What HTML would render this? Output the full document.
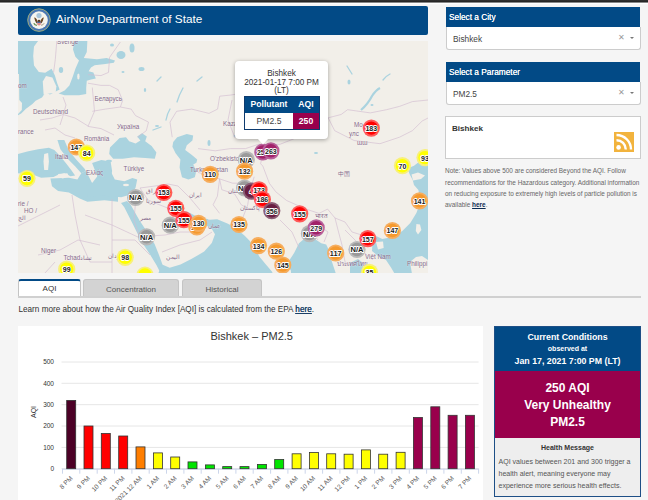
<!DOCTYPE html>
<html><head><meta charset="utf-8">
<style>
*{box-sizing:border-box;margin:0;padding:0}
html,body{width:648px;height:500px;overflow:hidden;background:#f5f5f5;font-family:"Liberation Sans",sans-serif;color:#333}
.abs{position:absolute}
#topbar{left:0;top:0;width:648px;height:5px;background:linear-gradient(#333 0,#222 2px,#888 2px,#888 2.6px,#fff 2.6px,#fff 4px,#f7f7f7 4px)}
#hdr{left:18px;top:6px;width:410px;height:29px;background:#024a86;border-radius:2px}
#hdr .t{position:absolute;left:38px;top:6.3px;color:#fff;font-size:11.75px;white-space:nowrap}
#map{left:18px;top:41px;width:410px;height:232px;background:#f2efe9;overflow:hidden}
.sh{left:446px;width:194px;height:20px;background:#024a86;color:#fff;font-size:8.3px;padding:4.8px 0 0 3px;white-space:nowrap;text-shadow:0 0 0.4px #fff}
.sel{left:446px;width:195px;height:22.5px;background:#fff;border:1px solid #ccc;border-top:none;border-radius:0 0 3px 3px;font-size:8.3px;color:#444;padding:6.5px 0 0 6px}
.sel .x{position:absolute;left:171px;top:5.5px;font-size:8px;color:#999}
.sel .c{position:absolute;left:183px;top:9.5px;width:0;height:0;border-left:2.3px solid transparent;border-right:2.3px solid transparent;border-top:2.6px solid #777}
#bbox{left:445px;top:116px;width:196px;height:43px;background:#fff;border:1px solid #ccc}
#bbox .t{position:absolute;left:6px;top:6.5px;font-weight:bold;font-size:8.1px;color:#333}
#rss{left:614px;top:132px;width:20px;height:20px;background:#f2b33d}
#note{left:445px;top:165.3px;width:200px;font-size:6.42px;line-height:11.3px;color:#666}
#note b{color:#0b2b52;text-decoration:underline}
.tab{top:279px;height:18px;border:1px solid #c4c4c4;border-bottom:none;border-radius:3px 3px 0 0;font-size:8px;color:#555;text-align:center;padding-top:5px;background:#d3d3d3}
#tabline{left:18px;top:296px;width:623px;height:2px;background:#d0d0d0}
#learn{left:18.5px;top:305px;font-size:8.16px;color:#333;white-space:nowrap}
#learn u{color:#1b3f66;text-shadow:0 0 0.3px #1b3f66}
#chart{left:18px;top:326px;width:465px;height:180px;background:#fff}
#cc{left:494px;top:326px;width:147px;height:171px;border:1px solid #1d4f86;background:#eee}
#cc .b{position:absolute;left:0;top:0;width:145px;height:44px;background:#024a86;color:#fff;font-weight:bold;text-align:center}
#cc .m{position:absolute;left:0;top:44px;width:145px;height:67px;background:#99004c;color:#fff;font-weight:bold;text-align:center;font-size:12px;line-height:17px;padding-top:9px}
#cc .h{position:absolute;left:0;top:111px;width:145px;color:#333}
</style></head><body>
<div id="topbar" class="abs"></div>
<div id="hdr" class="abs">
 <svg class="abs" style="left:9px;top:2px" width="24" height="24" viewBox="0 0 24 24">
  <circle cx="12" cy="12.1" r="11.3" fill="#4a78b4" stroke="#a9b27a" stroke-width="0.9"/>
  <circle cx="12" cy="12.1" r="8.8" fill="#f6f4ee"/>
  <circle cx="12" cy="7.6" r="2.6" fill="#a9c6dc"/>
  <path d="M7.2 9.5 Q9 9.2 10.6 13.2 L10.4 15.5 Q8.8 15 8 12.5Z" fill="#6e4b2a"/>
  <path d="M16.8 9.5 Q15 9.2 13.4 13.2 L13.6 15.5 Q15.2 15 16 12.5Z" fill="#6e4b2a"/>
  <circle cx="12" cy="13" r="1.3" fill="#5a3d22"/>
  <path d="M10.2 14.2 H13.8 V16.6 Q12 18.4 10.2 16.6Z" fill="#e08a8a"/>
  <rect x="10.2" y="13.8" width="3.6" height="1.2" fill="#4b6aa5"/>
  <path d="M6.8 15.2 Q8 17.5 10 17.2" fill="none" stroke="#5f8a4a" stroke-width="1.2"/>
  <path d="M17.2 15.2 Q16 17.5 14 17.2" fill="none" stroke="#9a8a6a" stroke-width="0.8"/>
 </svg>
 <div class="t">AirNow Department of State</div>
</div>
<div id="map" class="abs"><svg class="abs" style="left:0;top:0" width="410" height="232" viewBox="18 41 410 232">
<rect x="18" y="41" width="410" height="232" fill="#f2efe9"/>
<polygon points="18.0,40.0 38.8,40.0 34.0,46.4 33.2,56.0 34.0,65.6 38.8,72.0 45.2,72.8 51.6,68.8 54.8,75.2 57.2,83.2 59.6,89.6 50.0,94.4 45.2,92.8 42.0,97.6 35.6,100.8 32.4,104.0 26.0,108.8 21.2,113.6 18.0,115.2" fill="#aad3df"/>
<polygon points="18.0,74.0 19.0,74.0 19.3,100.0 22.0,103.0 21.8,110.0 19.0,113.0 18.0,114.0" fill="#f2efe9"/>
<polygon points="43.6,94.4 42.8,81.6 46.0,76.0 52.4,77.6 56.4,86.4 55.6,92.8 50.0,93.6" fill="#f2efe9"/>
<polygon points="74.2,40.0 87.4,40.0 86.8,52.0 83.8,58.0 97.0,59.2 106.6,58.0 115.0,60.4 113.8,62.8 105.4,64.0 94.6,65.2 91.0,67.6 88.6,71.2 93.4,72.4 95.8,78.4 91.0,79.6 86.8,80.8 86.2,88.0 86.2,94.0 79.0,95.2 64.6,95.2 58.6,93.4 64.6,90.4 69.4,85.6 73.0,76.0 75.4,68.8 79.0,60.4 75.4,56.8 73.0,49.6" fill="#aad3df"/>
<ellipse cx="78.4" cy="76.5" rx="1.2" ry="3" fill="#f2efe9"/>
<ellipse cx="121" cy="55" rx="4.5" ry="4" fill="#aad3df"/>
<ellipse cx="132" cy="48" rx="2.5" ry="4.5" fill="#aad3df"/>
<ellipse cx="61" cy="70" rx="2.2" ry="3" fill="#aad3df"/>
<ellipse cx="112" cy="45" rx="2" ry="1.5" fill="#aad3df"/>
<ellipse cx="145" cy="90" rx="1.2" ry="2" fill="#aad3df"/>
<g fill="none" stroke="#aad3df" stroke-width="1.3" stroke-linecap="round">
<path d="M177 102 Q179 95 183 88"/>
<path d="M197 81 L202 77"/>
<path d="M157 81 L161 77"/>
<path d="M166 120 Q167 114 170 109"/>
<path d="M153 130 L161 127"/>
<path d="M383 80 Q386 76 390 74"/>
<path d="M347 66 L352 74"/>
</g>
<ellipse cx="141.5" cy="69" rx="3" ry="2" fill="#aad3df"/>
<ellipse cx="123" cy="72" rx="1.5" ry="1" fill="#aad3df"/>
<polygon points="18.0,153.9 27.3,151.6 38.1,149.3 48.9,147.7 54.3,150.0 59.7,155.4 65.8,163.1 71.2,170.1 75.1,175.5 70.5,176.3 64.3,173.2 58.1,174.7 53.5,177.0 41.1,177.8 33.4,174.7 18.0,173.2" fill="#aad3df"/>
<polygon points="50.4,178.6 68.9,177.8 77.4,179.4 81.3,173.2 85.9,170.9 89.8,178.6 93.6,186.3 118.0,186.3 118.0,201.7 104.4,200.2 87.4,201.7 79.7,198.6 68.9,192.5 58.1,190.9 52.0,186.3" fill="#aad3df"/>
<polygon points="57.4,140.0 64.3,140.0 68.9,150.8 76.6,160.1 84.4,168.5 85.9,170.9 81.3,173.2 75.1,166.2 67.4,158.5 60.4,149.3" fill="#aad3df"/>
<polygon points="92.1,163.1 101.3,160.1 110.6,161.6 112.1,170.9 110.6,180.1 104.4,184.8 95.2,186.3 98.2,178.6 95.2,170.9" fill="#aad3df"/>
<polygon points="44.2,153.9 48.1,153.1 48.9,161.6 48.1,170.1 44.2,170.1 43.5,161.6" fill="#f2efe9"/>
<polygon points="58.1,174.0 67.4,173.2 68.9,176.3 62.8,178.6 58.1,177.0" fill="#f2efe9"/>
<ellipse cx="96" cy="185.5" rx="4.5" ry="1" fill="#f2efe9"/>
<polygon points="86.0,182.8 92.4,182.8 97.2,176.4 95.6,166.8 100.4,162.0 108.4,160.4 110.0,170.0 114.8,179.6 124.4,181.2 132.4,178.0 137.2,179.6 135.6,187.6 132.4,194.0 121.2,197.2 102.0,195.6 87.6,197.2" fill="#aad3df"/>
<ellipse cx="126" cy="185" rx="3" ry="1.2" fill="#f2efe9"/>
<polygon points="109.2,154.0 110.0,147.6 114.8,142.8 119.6,138.0 126.0,137.2 129.2,141.2 135.6,143.6 140.4,140.4 137.2,136.4 142.0,133.2 146.8,136.4 145.2,141.2 151.6,146.0 156.4,152.4 154.8,158.8 145.2,158.0 134.0,157.2 122.8,158.8 113.2,158.8" fill="#aad3df"/>
<ellipse cx="109" cy="161" rx="3" ry="1.2" fill="#aad3df"/>
<polygon points="177.2,137.2 186.8,134.0 193.2,135.6 192.4,140.4 186.8,145.2 185.2,150.0 191.6,154.8 197.2,159.6 196.4,162.8 193.2,164.4 196.4,170.8 194.8,177.2 188.4,179.6 182.0,177.2 179.6,167.6 180.4,159.6 175.6,153.2 172.4,146.8 173.2,142.0" fill="#aad3df"/>
<ellipse cx="209" cy="143" rx="1.5" ry="3" fill="#aad3df"/>
<ellipse cx="157" cy="126" rx="2" ry="1" fill="#aad3df"/>
<polygon points="121.0,203.0 124.3,207.3 133.0,224.6 141.6,241.8 150.2,254.8 156.7,265.6 160.0,272.0 163.0,268.0 162.1,263.4 158.9,254.8 154.6,244.0 148.0,233.2 139.4,220.2 130.8,205.1 127.0,201.0" fill="#aad3df"/>
<polygon points="179.4,210.5 187.0,211.6 197.8,217.0 208.6,219.2 205.3,225.6 197.8,226.7 191.3,224.6 184.8,219.2" fill="#aad3df"/>
<polygon points="158.0,274.0 162.1,264.5 169.7,267.8 180.5,264.5 191.3,259.1 204.2,251.6 211.8,242.9 215.0,234.3 211.8,228.9 206.4,225.6 202.1,220.2 217.2,219.2 227.4,223.5 234.8,227.2 244.7,235.8 249.6,240.7 254.6,248.1 259.5,256.8 265.7,264.2 271.9,271.6 273.1,274.0" fill="#aad3df"/>
<polygon points="282.0,274.0 286.7,264.2 294.1,253.1 299.0,243.2 306.4,237.0 313.8,238.3 321.2,243.2 326.2,244.4 328.6,249.4 331.1,259.3 333.6,266.7 336.0,274.0" fill="#aad3df"/>
<ellipse cx="289" cy="272" rx="2" ry="3" fill="#f2efe9"/>
<polygon points="350.0,263.0 358.0,259.0 363.0,263.0 363.0,274.0 350.0,274.0" fill="#aad3df"/>
<polygon points="407.3,168.4 414.0,165.7 419.5,161.6 430.0,163.0 430.0,274.0 394.8,274.0 391.0,267.6 386.0,260.0 378.0,256.0 372.0,251.0 372.6,240.0 376.0,236.0 382.3,239.0 392.3,237.1 402.3,231.0 410.3,223.1 416.4,213.1 420.4,202.0 418.4,190.0 414.0,185.0 412.7,180.0 410.0,175.0" fill="#aad3df"/>
<polygon points="416.4,224.0 420.0,224.5 421.4,230.0 418.0,234.6 415.8,231.0" fill="#f2efe9"/>
<polygon points="410.0,262.0 416.0,257.0 422.0,256.0 428.0,260.0 428.0,274.0 412.0,274.0" fill="#f2efe9"/>
<polygon points="376.0,242.0 383.0,241.5 383.7,248.0 378.0,249.5" fill="#f2efe9"/>
<polygon points="411.5,174.5 418.0,172.5 425.0,175.5 421.0,179.0 413.0,180.5" fill="#f2efe9"/>
<polygon points="419.0,150.0 428.0,148.0 428.0,163.0 423.0,166.0 420.0,160.0" fill="#f2efe9"/>
<path d="M361 110 Q368 104 372 96 Q376 90 380 88" fill="none" stroke="#aad3df" stroke-width="2.2"/>
<ellipse cx="349" cy="82" rx="1.5" ry="2.5" fill="#aad3df"/>
<ellipse cx="372" cy="105" rx="1.5" ry="1" fill="#aad3df"/>
<ellipse cx="316" cy="153" rx="2" ry="1" fill="#aad3df"/>
<ellipse cx="236" cy="136" rx="2.5" ry="1.2" fill="#aad3df"/>
<g fill="none" stroke="#d2bdd0" stroke-width="0.65" stroke-linejoin="round">
<polyline points="56.9,40 55.3,59.4 53.6,72.4"/>
<polyline points="120.4,42 109.6,57.3 108.5,72.4 101,75.6 88,74.6"/>
<polyline points="88,83.2 101,85.4 109.6,85.4 118.2,89.7 122.6,100.5 120.4,107 131.2,109.1 135.5,115.6 148.5,122.1 146.3,130.7 137.7,137.2"/>
<polyline points="92.3,111.3 105.3,109.1 120.4,107"/>
<polyline points="92.3,87.5 94.5,111.3 88,126.4"/>
<polyline points="63,97 66,105 63.4,114.5 60,125"/>
<polyline points="88,126.4 101,128.6 114,135"/>
<polyline points="40,120 52,118 63,114.5 75,118 88,126"/>
<polyline points="45,130 55,128 65,135 75,138"/>
<polyline points="172.2,137.2 170,122.1 176.6,111.3 191.7,109.1 209,113.4 217.6,109.1 219.7,96.2 231,95 250.4,91.8 282.8,101.6 328.2,117.8 341.1,114.5 347.6,109.7 370.3,112.9 386.5,109.7 399.5,106.4 412.4,101.6 428,100"/>
<polyline points="328.2,117.8 334.7,130.7 354.1,140.5 380,143.7 399.5,137.2 412.4,130.7 422.2,121 428,118"/>
<polyline points="198,148.6 215.3,150.8 230.4,148.6 245.5,148.6 258.5,144.3 280,144.3 290.9,140 310,132 328.2,117.8"/>
<polyline points="198,172.4 219.6,178.9 232.6,183.2 241.2,183.2"/>
<polyline points="219.6,178.9 221.8,189.7 234.7,194 241.2,204.8 249.8,209.1"/>
<polyline points="219.6,178.9 217.4,196.2 213.1,204.8 219.6,213.4"/>
<polyline points="254.2,176.7 249.8,191.8 247.7,204.8 241.2,222.1"/>
<polyline points="258.5,144.3 262.8,153 260.6,163.8 262.8,166 269.3,183.2 275.8,191.8 286.6,200.5 306,209.1 319,213.4 327.6,209.1 335,218 345,222 352,232 365,236 372,240"/>
<polyline points="324,242 328,232 318,225 312,232 318,240"/>
<polyline points="335,218 338,230 342,245 345,262 352,266"/>
<polyline points="345,230 355,240 362,250 368,256"/>
<polyline points="140,188 155,186 168,184 178,186 190,198 200,210"/>
<polyline points="140,188 148,200 160,205 178,212"/>
<polyline points="136,197 134,220 140,238"/>
<polyline points="112,199 112,240 112,273"/>
<polyline points="72,195 75,215 80,240 90,262 112,262"/>
<polyline points="85,215 112,225 140,238"/>
<polyline points="112,240 135,240 150,255"/>
<polyline points="18,226 40,215 60,205"/>
<polyline points="150,236 165,235 180,232 195,232 210,220"/>
<polyline points="162,252 180,245 200,240 212,232"/>
<polyline points="38,255 60,250 78,240 100,245"/>
<polyline points="45,273 55,262"/>
<polyline points="232,100 228,120 235,138"/>
<polyline points="280,220 292,232 300,250"/>
</g>
<g font-family="Liberation Sans" font-size="6.3" fill="#846888" stroke="#fff" stroke-width="0.6" stroke-opacity="0.5" paint-order="stroke">
<text x="33" y="113.5">Deutschland</text>
<text x="94.5" y="100.5">Беларусь</text>
<text x="117" y="128.5">Україна</text>
<text x="84" y="140.5">România</text>
<text x="55" y="158.5">Italia</text>
<text x="86" y="175">Ελλάς</text>
<text x="123.6" y="171">Türkiye</text>
<text x="18" y="134">rance</text>
<text x="18" y="88">om</text>
<text x="57" y="44">Sverige</text>
<text x="223" y="126">Kaza</text>
<text x="210" y="161">O'zbekiston</text>
<text x="190" y="172">Turkmenistan</text>
<text x="41" y="252.5">Niger</text>
<text x="63.5" y="259.5">Tchad</text>
<text x="140" y="220">مصر</text>
<text x="189" y="197">ايران</text><text x="146" y="193">العراق</text><text x="146" y="203">سوريا</text>
<text x="166" y="259">اليمن</text><text x="108" y="258">السودان</text><text x="80" y="259.5">تشاد</text>
<text x="208" y="228">عمان</text>
<text x="338" y="175.5">中国</text>
<text x="365" y="259">Việt Nam</text>
<text x="337" y="266">ประเทศไทย</text>
<text x="407" y="266">Philippi</text>
<text x="354" y="127">Mo</text>
<text x="349" y="136">улс</text>
<text x="357" y="145">ɯɯ</text>
<text x="18" y="206">rie /</text><text x="24" y="213">НО /</text><text x="18" y="220">الج</text>
<text x="315" y="218">भारत</text>
<text x="240" y="210">پاکستان</text>
<text x="228" y="193">افغانستان</text>
</g>

<circle cx="76.3" cy="147" r="8.6" fill="#f6ad5e"/><circle cx="76.3" cy="147" r="6.7" fill="#f59a2e"/>
<text x="76.3" y="149.9" font-size="8" font-weight="bold" text-anchor="middle" fill="#1a1a1a" stroke="#fff" stroke-width="2" textLength="11.7" lengthAdjust="spacingAndGlyphs" paint-order="stroke" stroke-linejoin="round">147</text>
<circle cx="86.7" cy="153" r="8.6" fill="#f8f07a"/><circle cx="86.7" cy="153" r="6.7" fill="#ffff00"/>
<text x="86.7" y="155.9" font-size="8" font-weight="bold" text-anchor="middle" fill="#1a1a1a" stroke="#fff" stroke-width="2" textLength="7.8" lengthAdjust="spacingAndGlyphs" paint-order="stroke" stroke-linejoin="round">84</text>
<circle cx="27" cy="178.5" r="8.6" fill="#f8f07a"/><circle cx="27" cy="178.5" r="6.7" fill="#ffff00"/>
<text x="27" y="181.4" font-size="8" font-weight="bold" text-anchor="middle" fill="#1a1a1a" stroke="#fff" stroke-width="2" textLength="7.8" lengthAdjust="spacingAndGlyphs" paint-order="stroke" stroke-linejoin="round">59</text>
<circle cx="210.2" cy="174.3" r="8.6" fill="#f6ad5e"/><circle cx="210.2" cy="174.3" r="6.7" fill="#f59a2e"/>
<text x="210.2" y="177.20000000000002" font-size="8" font-weight="bold" text-anchor="middle" fill="#1a1a1a" stroke="#fff" stroke-width="2" textLength="11.7" lengthAdjust="spacingAndGlyphs" paint-order="stroke" stroke-linejoin="round">110</text>
<circle cx="135.6" cy="197.5" r="8.6" fill="#b8b8b8"/><circle cx="135.6" cy="197.5" r="6.7" fill="#9a9a9a"/>
<text x="135.6" y="200.4" font-size="8" font-weight="bold" text-anchor="middle" fill="#1a1a1a" stroke="#fff" stroke-width="2" textLength="13" lengthAdjust="spacingAndGlyphs" paint-order="stroke" stroke-linejoin="round">N/A</text>
<circle cx="163.8" cy="192.5" r="8.6" fill="#ff5a5a"/><circle cx="163.8" cy="192.5" r="6.7" fill="#ff0000"/>
<text x="163.8" y="195.4" font-size="8" font-weight="bold" text-anchor="middle" fill="#1a1a1a" stroke="#fff" stroke-width="2" textLength="11.7" lengthAdjust="spacingAndGlyphs" paint-order="stroke" stroke-linejoin="round">153</text>
<circle cx="175.8" cy="208.3" r="8.6" fill="#ff5a5a"/><circle cx="175.8" cy="208.3" r="6.7" fill="#ff0000"/>
<text x="175.8" y="211.20000000000002" font-size="8" font-weight="bold" text-anchor="middle" fill="#1a1a1a" stroke="#fff" stroke-width="2" textLength="11.7" lengthAdjust="spacingAndGlyphs" paint-order="stroke" stroke-linejoin="round">155</text>
<circle cx="170.3" cy="225.2" r="8.6" fill="#b8b8b8"/><circle cx="170.3" cy="225.2" r="6.7" fill="#9a9a9a"/>
<text x="170.3" y="228.1" font-size="8" font-weight="bold" text-anchor="middle" fill="#1a1a1a" stroke="#fff" stroke-width="2" textLength="13" lengthAdjust="spacingAndGlyphs" paint-order="stroke" stroke-linejoin="round">N/A</text>
<circle cx="183.9" cy="219.7" r="8.6" fill="#ff5a5a"/><circle cx="183.9" cy="219.7" r="6.7" fill="#ff0000"/>
<text x="183.9" y="222.6" font-size="8" font-weight="bold" text-anchor="middle" fill="#1a1a1a" stroke="#fff" stroke-width="2" textLength="11.7" lengthAdjust="spacingAndGlyphs" paint-order="stroke" stroke-linejoin="round">155</text>
<circle cx="196.8" cy="227" r="8.6" fill="#f6ad5e"/><circle cx="196.8" cy="227" r="6.7" fill="#f59a2e"/>
<text x="196.8" y="229.9" font-size="8" font-weight="bold" text-anchor="middle" fill="#1a1a1a" stroke="#fff" stroke-width="2" textLength="11.7" lengthAdjust="spacingAndGlyphs" paint-order="stroke" stroke-linejoin="round">164</text>
<circle cx="198.6" cy="223.4" r="8.6" fill="#f6ad5e"/><circle cx="198.6" cy="223.4" r="6.7" fill="#f59a2e"/>
<text x="198.6" y="226.3" font-size="8" font-weight="bold" text-anchor="middle" fill="#1a1a1a" stroke="#fff" stroke-width="2" textLength="11.7" lengthAdjust="spacingAndGlyphs" paint-order="stroke" stroke-linejoin="round">130</text>
<circle cx="146.6" cy="236.8" r="8.6" fill="#b8b8b8"/><circle cx="146.6" cy="236.8" r="6.7" fill="#9a9a9a"/>
<text x="146.6" y="239.70000000000002" font-size="8" font-weight="bold" text-anchor="middle" fill="#1a1a1a" stroke="#fff" stroke-width="2" textLength="13" lengthAdjust="spacingAndGlyphs" paint-order="stroke" stroke-linejoin="round">N/A</text>
<circle cx="125.2" cy="257.3" r="8.6" fill="#f8f07a"/><circle cx="125.2" cy="257.3" r="6.7" fill="#ffff00"/>
<text x="125.2" y="260.2" font-size="8" font-weight="bold" text-anchor="middle" fill="#1a1a1a" stroke="#fff" stroke-width="2" textLength="7.8" lengthAdjust="spacingAndGlyphs" paint-order="stroke" stroke-linejoin="round">98</text>
<circle cx="66.7" cy="269.1" r="8.6" fill="#f8f07a"/><circle cx="66.7" cy="269.1" r="6.7" fill="#ffff00"/>
<text x="66.7" y="272.0" font-size="8" font-weight="bold" text-anchor="middle" fill="#1a1a1a" stroke="#fff" stroke-width="2" textLength="7.8" lengthAdjust="spacingAndGlyphs" paint-order="stroke" stroke-linejoin="round">99</text>
<circle cx="145" cy="275" r="8.6" fill="#f8f07a"/><circle cx="145" cy="275" r="6.7" fill="#ffff00"/>
<circle cx="262.8" cy="152" r="8.6" fill="#b8609a"/><circle cx="262.8" cy="152" r="6.7" fill="#a2226a"/>
<text x="262.8" y="154.9" font-size="8" font-weight="bold" text-anchor="middle" fill="#1a1a1a" stroke="#fff" stroke-width="2" textLength="11.7" lengthAdjust="spacingAndGlyphs" paint-order="stroke" stroke-linejoin="round">250</text>
<circle cx="270.9" cy="150.8" r="8.6" fill="#b8609a"/><circle cx="270.9" cy="150.8" r="6.7" fill="#a2226a"/>
<text x="270.9" y="153.70000000000002" font-size="8" font-weight="bold" text-anchor="middle" fill="#1a1a1a" stroke="#fff" stroke-width="2" textLength="11.7" lengthAdjust="spacingAndGlyphs" paint-order="stroke" stroke-linejoin="round">263</text>
<circle cx="246.3" cy="159.7" r="8.6" fill="#b8b8b8"/><circle cx="246.3" cy="159.7" r="6.7" fill="#9a9a9a"/>
<text x="246.3" y="162.6" font-size="8" font-weight="bold" text-anchor="middle" fill="#1a1a1a" stroke="#fff" stroke-width="2" textLength="13" lengthAdjust="spacingAndGlyphs" paint-order="stroke" stroke-linejoin="round">N/A</text>
<circle cx="244.6" cy="171.2" r="8.6" fill="#f6ad5e"/><circle cx="244.6" cy="171.2" r="6.7" fill="#f59a2e"/>
<text x="244.6" y="174.1" font-size="8" font-weight="bold" text-anchor="middle" fill="#1a1a1a" stroke="#fff" stroke-width="2" textLength="11.7" lengthAdjust="spacingAndGlyphs" paint-order="stroke" stroke-linejoin="round">132</text>
<circle cx="244.6" cy="188" r="8.6" fill="#b8b8b8"/><circle cx="244.6" cy="188" r="6.7" fill="#9a9a9a"/>
<text x="244.6" y="190.9" font-size="8" font-weight="bold" text-anchor="middle" fill="#1a1a1a" stroke="#fff" stroke-width="2" textLength="13" lengthAdjust="spacingAndGlyphs" paint-order="stroke" stroke-linejoin="round">N/A</text>
<circle cx="251.4" cy="191.1" r="8.6" fill="#8b5c74"/><circle cx="251.4" cy="191.1" r="6.7" fill="#6a1e42"/>
<text x="251.4" y="194.0" font-size="8" font-weight="bold" text-anchor="middle" fill="#1a1a1a" stroke="#fff" stroke-width="2" textLength="3.9" lengthAdjust="spacingAndGlyphs" paint-order="stroke" stroke-linejoin="round">4</text>
<circle cx="259" cy="189.8" r="8.6" fill="#ff5a5a"/><circle cx="259" cy="189.8" r="6.7" fill="#ff0000"/>
<text x="259" y="192.70000000000002" font-size="8" font-weight="bold" text-anchor="middle" fill="#1a1a1a" stroke="#fff" stroke-width="2" textLength="11.7" lengthAdjust="spacingAndGlyphs" paint-order="stroke" stroke-linejoin="round">173</text>
<circle cx="262.4" cy="199.3" r="8.6" fill="#ff5a5a"/><circle cx="262.4" cy="199.3" r="6.7" fill="#ff0000"/>
<text x="262.4" y="202.20000000000002" font-size="8" font-weight="bold" text-anchor="middle" fill="#1a1a1a" stroke="#fff" stroke-width="2" textLength="11.7" lengthAdjust="spacingAndGlyphs" paint-order="stroke" stroke-linejoin="round">186</text>
<circle cx="271.8" cy="210.7" r="8.6" fill="#8b5c74"/><circle cx="271.8" cy="210.7" r="6.7" fill="#6a1e42"/>
<text x="271.8" y="213.6" font-size="8" font-weight="bold" text-anchor="middle" fill="#1a1a1a" stroke="#fff" stroke-width="2" textLength="11.7" lengthAdjust="spacingAndGlyphs" paint-order="stroke" stroke-linejoin="round">356</text>
<circle cx="299.7" cy="213.8" r="8.6" fill="#ff5a5a"/><circle cx="299.7" cy="213.8" r="6.7" fill="#ff0000"/>
<text x="299.7" y="216.70000000000002" font-size="8" font-weight="bold" text-anchor="middle" fill="#1a1a1a" stroke="#fff" stroke-width="2" textLength="11.7" lengthAdjust="spacingAndGlyphs" paint-order="stroke" stroke-linejoin="round">155</text>
<circle cx="239" cy="224.5" r="8.6" fill="#f6ad5e"/><circle cx="239" cy="224.5" r="6.7" fill="#f59a2e"/>
<text x="239" y="227.4" font-size="8" font-weight="bold" text-anchor="middle" fill="#1a1a1a" stroke="#fff" stroke-width="2" textLength="11.7" lengthAdjust="spacingAndGlyphs" paint-order="stroke" stroke-linejoin="round">135</text>
<circle cx="309.4" cy="233.6" r="8.6" fill="#b8b8b8"/><circle cx="309.4" cy="233.6" r="6.7" fill="#9a9a9a"/>
<text x="309.4" y="236.5" font-size="8" font-weight="bold" text-anchor="middle" fill="#1a1a1a" stroke="#fff" stroke-width="2" textLength="13" lengthAdjust="spacingAndGlyphs" paint-order="stroke" stroke-linejoin="round">N/A</text>
<circle cx="316.2" cy="227.8" r="8.6" fill="#b8609a"/><circle cx="316.2" cy="227.8" r="6.7" fill="#a2226a"/>
<text x="316.2" y="230.70000000000002" font-size="8" font-weight="bold" text-anchor="middle" fill="#1a1a1a" stroke="#fff" stroke-width="2" textLength="11.7" lengthAdjust="spacingAndGlyphs" paint-order="stroke" stroke-linejoin="round">279</text>
<circle cx="258.5" cy="245.6" r="8.6" fill="#f6ad5e"/><circle cx="258.5" cy="245.6" r="6.7" fill="#f59a2e"/>
<text x="258.5" y="248.5" font-size="8" font-weight="bold" text-anchor="middle" fill="#1a1a1a" stroke="#fff" stroke-width="2" textLength="11.7" lengthAdjust="spacingAndGlyphs" paint-order="stroke" stroke-linejoin="round">134</text>
<circle cx="276.3" cy="251.1" r="8.6" fill="#f6ad5e"/><circle cx="276.3" cy="251.1" r="6.7" fill="#f59a2e"/>
<text x="276.3" y="254.0" font-size="8" font-weight="bold" text-anchor="middle" fill="#1a1a1a" stroke="#fff" stroke-width="2" textLength="11.7" lengthAdjust="spacingAndGlyphs" paint-order="stroke" stroke-linejoin="round">126</text>
<circle cx="282.8" cy="265" r="8.6" fill="#f6ad5e"/><circle cx="282.8" cy="265" r="6.7" fill="#f59a2e"/>
<text x="282.8" y="267.9" font-size="8" font-weight="bold" text-anchor="middle" fill="#1a1a1a" stroke="#fff" stroke-width="2" textLength="11.7" lengthAdjust="spacingAndGlyphs" paint-order="stroke" stroke-linejoin="round">145</text>
<circle cx="335.7" cy="253" r="8.6" fill="#f6ad5e"/><circle cx="335.7" cy="253" r="6.7" fill="#f59a2e"/>
<text x="335.7" y="255.9" font-size="8" font-weight="bold" text-anchor="middle" fill="#1a1a1a" stroke="#fff" stroke-width="2" textLength="11.7" lengthAdjust="spacingAndGlyphs" paint-order="stroke" stroke-linejoin="round">117</text>
<circle cx="357" cy="249.5" r="8.6" fill="#b8b8b8"/><circle cx="357" cy="249.5" r="6.7" fill="#9a9a9a"/>
<text x="357" y="252.4" font-size="8" font-weight="bold" text-anchor="middle" fill="#1a1a1a" stroke="#fff" stroke-width="2" textLength="13" lengthAdjust="spacingAndGlyphs" paint-order="stroke" stroke-linejoin="round">N/A</text>
<circle cx="367.8" cy="238.6" r="8.6" fill="#ff5a5a"/><circle cx="367.8" cy="238.6" r="6.7" fill="#ff0000"/>
<text x="367.8" y="241.5" font-size="8" font-weight="bold" text-anchor="middle" fill="#1a1a1a" stroke="#fff" stroke-width="2" textLength="11.7" lengthAdjust="spacingAndGlyphs" paint-order="stroke" stroke-linejoin="round">157</text>
<circle cx="392.4" cy="230.5" r="8.6" fill="#f6ad5e"/><circle cx="392.4" cy="230.5" r="6.7" fill="#f59a2e"/>
<text x="392.4" y="233.4" font-size="8" font-weight="bold" text-anchor="middle" fill="#1a1a1a" stroke="#fff" stroke-width="2" textLength="11.7" lengthAdjust="spacingAndGlyphs" paint-order="stroke" stroke-linejoin="round">147</text>
<circle cx="419.5" cy="200.8" r="8.6" fill="#f6ad5e"/><circle cx="419.5" cy="200.8" r="6.7" fill="#f59a2e"/>
<text x="419.5" y="203.70000000000002" font-size="8" font-weight="bold" text-anchor="middle" fill="#1a1a1a" stroke="#fff" stroke-width="2" textLength="11.7" lengthAdjust="spacingAndGlyphs" paint-order="stroke" stroke-linejoin="round">141</text>
<circle cx="402.4" cy="165.7" r="8.6" fill="#f8f07a"/><circle cx="402.4" cy="165.7" r="6.7" fill="#ffff00"/>
<text x="402.4" y="168.6" font-size="8" font-weight="bold" text-anchor="middle" fill="#1a1a1a" stroke="#fff" stroke-width="2" textLength="7.8" lengthAdjust="spacingAndGlyphs" paint-order="stroke" stroke-linejoin="round">70</text>
<circle cx="425" cy="157.6" r="8.6" fill="#f8f07a"/><circle cx="425" cy="157.6" r="6.7" fill="#ffff00"/>
<text x="425" y="160.5" font-size="8" font-weight="bold" text-anchor="middle" fill="#1a1a1a" stroke="#fff" stroke-width="2" textLength="7.8" lengthAdjust="spacingAndGlyphs" paint-order="stroke" stroke-linejoin="round">93</text>
<circle cx="369.5" cy="272.4" r="8.6" fill="#f8f07a"/><circle cx="369.5" cy="272.4" r="6.7" fill="#ffff00"/>
<text x="369.5" y="275.29999999999995" font-size="8" font-weight="bold" text-anchor="middle" fill="#1a1a1a" stroke="#fff" stroke-width="2" textLength="7.8" lengthAdjust="spacingAndGlyphs" paint-order="stroke" stroke-linejoin="round">35</text>
<circle cx="371.3" cy="128.1" r="8.6" fill="#ff5a5a"/><circle cx="371.3" cy="128.1" r="6.7" fill="#ff0000"/>
<text x="371.3" y="131.0" font-size="8" font-weight="bold" text-anchor="middle" fill="#1a1a1a" stroke="#fff" stroke-width="2" textLength="11.7" lengthAdjust="spacingAndGlyphs" paint-order="stroke" stroke-linejoin="round">183</text>
</svg></div>

<div id="popup" class="abs" style="left:235px;top:61px;width:93px;height:78px;background:#fff;border-radius:4px;box-shadow:0 1px 4.5px rgba(0,0,0,0.33)">
 <div class="abs" style="left:0;top:9px;width:93px;text-align:center;font-size:8.2px;line-height:8.6px;color:#333">Bishkek<br>2021-01-17 7:00 PM<br>(LT)</div>
 <div class="abs" style="left:9px;top:35px;width:76px;height:34px;border:1px solid #0d3a6e;background:#024a86">
  <div class="abs" style="left:0;top:0;width:48px;height:16px;color:#fff;font-weight:bold;font-size:8.6px;text-align:center;padding-top:2.3px">Pollutant</div>
  <div class="abs" style="left:48px;top:0;width:26px;height:16px;color:#fff;font-weight:bold;font-size:8.6px;text-align:center;padding-top:2.3px">AQI</div>
  <div class="abs" style="left:0;top:16px;width:48px;height:16px;background:#fff;color:#444;font-size:8.6px;text-align:center;padding-top:2.8px">PM2.5</div>
  <div class="abs" style="left:48px;top:16px;width:26px;height:16px;background:#99004c;color:#fff;font-weight:bold;font-size:8.6px;text-align:center;padding-top:2.8px">250</div>
 </div>
</div>
<svg class="abs" style="left:254px;top:138px" width="18" height="8" viewBox="0 0 18 8"><path d="M3 0 L9 6.5 L15 0Z" fill="#fff"/></svg>
<div class="sh abs" style="top:7px">Select a City</div>
<div class="sel abs" style="top:27px">Bishkek<span class="x">✕</span><span class="c"></span></div>
<div class="sh abs" style="top:62px">Select a Parameter</div>
<div class="sel abs" style="top:82px">PM2.5<span class="x">✕</span><span class="c"></span></div>
<div id="bbox" class="abs"><div class="t">Bishkek</div></div>
<svg id="rss" class="abs" width="20" height="20" viewBox="0 0 20 20">
 <circle cx="4.6" cy="15.4" r="2.3" fill="#fff"/>
 <path d="M2.5 8.2 A9.3 9.3 0 0 1 11.8 17.5" fill="none" stroke="#fff" stroke-width="2.4"/>
 <path d="M2.5 3 A14.5 14.5 0 0 1 17 17.5" fill="none" stroke="#fff" stroke-width="2.4"/>
</svg>
<div id="note" class="abs">Note: Values above 500 are considered Beyond the AQI. Follow<br>recommendations for the Hazardous category. Additional information<br>on reducing exposure to extremely high levels of particle pollution is<br>available <b>here</b>.</div>

<div class="tab abs" style="left:18px;width:63px;background:#fff;border-top:2px solid #024a86;padding-top:3px;color:#333">AQI</div>
<div class="tab abs" style="left:83px;width:96px">Concentration</div>
<div class="tab abs" style="left:182px;width:80px">Historical</div>
<div id="tabline" class="abs"></div>
<div id="learn" class="abs">Learn more about how the Air Quality Index [AQI] is calculated from the EPA <u>here</u>.</div>

<div id="chart" class="abs"></div><svg class="abs" style="left:0;top:0" width="648" height="500" viewBox="0 0 648 500">
<line x1="61.5" y1="362.0" x2="478.6" y2="362.0" stroke="#e6e6e6" stroke-width="1"/>
<text x="54" y="364.3" font-size="6.5" text-anchor="end" fill="#333">500</text>
<line x1="61.5" y1="383.3" x2="478.6" y2="383.3" stroke="#e6e6e6" stroke-width="1"/>
<text x="54" y="385.6" font-size="6.5" text-anchor="end" fill="#333">400</text>
<line x1="61.5" y1="404.7" x2="478.6" y2="404.7" stroke="#e6e6e6" stroke-width="1"/>
<text x="54" y="407.0" font-size="6.5" text-anchor="end" fill="#333">300</text>
<line x1="61.5" y1="426.0" x2="478.6" y2="426.0" stroke="#e6e6e6" stroke-width="1"/>
<text x="54" y="428.3" font-size="6.5" text-anchor="end" fill="#333">200</text>
<line x1="61.5" y1="447.4" x2="478.6" y2="447.4" stroke="#e6e6e6" stroke-width="1"/>
<text x="54" y="449.7" font-size="6.5" text-anchor="end" fill="#333">100</text>
<line x1="61.5" y1="468.7" x2="478.6" y2="468.7" stroke="#e6e6e6" stroke-width="1"/>
<text x="54" y="471.0" font-size="6.5" text-anchor="end" fill="#333">0</text>
<line x1="62.5" y1="469.2" x2="478.6" y2="469.2" stroke="#ccd6eb" stroke-width="1"/>
<line x1="62.5" y1="468.7" x2="62.5" y2="473.7" stroke="#ccd6eb" stroke-width="1"/>
<line x1="79.8" y1="468.7" x2="79.8" y2="473.7" stroke="#ccd6eb" stroke-width="1"/>
<line x1="97.2" y1="468.7" x2="97.2" y2="473.7" stroke="#ccd6eb" stroke-width="1"/>
<line x1="114.5" y1="468.7" x2="114.5" y2="473.7" stroke="#ccd6eb" stroke-width="1"/>
<line x1="131.9" y1="468.7" x2="131.9" y2="473.7" stroke="#ccd6eb" stroke-width="1"/>
<line x1="149.2" y1="468.7" x2="149.2" y2="473.7" stroke="#ccd6eb" stroke-width="1"/>
<line x1="166.5" y1="468.7" x2="166.5" y2="473.7" stroke="#ccd6eb" stroke-width="1"/>
<line x1="183.9" y1="468.7" x2="183.9" y2="473.7" stroke="#ccd6eb" stroke-width="1"/>
<line x1="201.2" y1="468.7" x2="201.2" y2="473.7" stroke="#ccd6eb" stroke-width="1"/>
<line x1="218.5" y1="468.7" x2="218.5" y2="473.7" stroke="#ccd6eb" stroke-width="1"/>
<line x1="235.9" y1="468.7" x2="235.9" y2="473.7" stroke="#ccd6eb" stroke-width="1"/>
<line x1="253.2" y1="468.7" x2="253.2" y2="473.7" stroke="#ccd6eb" stroke-width="1"/>
<line x1="270.6" y1="468.7" x2="270.6" y2="473.7" stroke="#ccd6eb" stroke-width="1"/>
<line x1="287.9" y1="468.7" x2="287.9" y2="473.7" stroke="#ccd6eb" stroke-width="1"/>
<line x1="305.2" y1="468.7" x2="305.2" y2="473.7" stroke="#ccd6eb" stroke-width="1"/>
<line x1="322.6" y1="468.7" x2="322.6" y2="473.7" stroke="#ccd6eb" stroke-width="1"/>
<line x1="339.9" y1="468.7" x2="339.9" y2="473.7" stroke="#ccd6eb" stroke-width="1"/>
<line x1="357.2" y1="468.7" x2="357.2" y2="473.7" stroke="#ccd6eb" stroke-width="1"/>
<line x1="374.6" y1="468.7" x2="374.6" y2="473.7" stroke="#ccd6eb" stroke-width="1"/>
<line x1="391.9" y1="468.7" x2="391.9" y2="473.7" stroke="#ccd6eb" stroke-width="1"/>
<line x1="409.3" y1="468.7" x2="409.3" y2="473.7" stroke="#ccd6eb" stroke-width="1"/>
<line x1="426.6" y1="468.7" x2="426.6" y2="473.7" stroke="#ccd6eb" stroke-width="1"/>
<line x1="443.9" y1="468.7" x2="443.9" y2="473.7" stroke="#ccd6eb" stroke-width="1"/>
<line x1="461.3" y1="468.7" x2="461.3" y2="473.7" stroke="#ccd6eb" stroke-width="1"/>
<line x1="478.6" y1="468.7" x2="478.6" y2="473.7" stroke="#ccd6eb" stroke-width="1"/>
<rect x="66.7" y="400.4" width="9" height="68.3" fill="#4c0026" stroke="#333" stroke-width="0.8"/>
<text x="73.0" y="478.7" font-size="6.5" text-anchor="end" fill="#555" transform="rotate(-45 73.0 478.7)">8 PM</text>
<rect x="84.0" y="426.0" width="9" height="42.7" fill="#ff0000" stroke="#333" stroke-width="0.8"/>
<text x="90.3" y="478.7" font-size="6.5" text-anchor="end" fill="#555" transform="rotate(-45 90.3 478.7)">9 PM</text>
<rect x="101.3" y="433.5" width="9" height="35.2" fill="#ff0000" stroke="#333" stroke-width="0.8"/>
<text x="107.6" y="478.7" font-size="6.5" text-anchor="end" fill="#555" transform="rotate(-45 107.6 478.7)">10 PM</text>
<rect x="118.7" y="436.0" width="9" height="32.7" fill="#ff0000" stroke="#333" stroke-width="0.8"/>
<text x="125.0" y="478.7" font-size="6.5" text-anchor="end" fill="#555" transform="rotate(-45 125.0 478.7)">11 PM</text>
<rect x="136.0" y="446.9" width="9" height="21.8" fill="#ff7e00" stroke="#333" stroke-width="0.8"/>
<text x="142.3" y="478.7" font-size="6.5" text-anchor="end" fill="#555" transform="rotate(-45 142.3 478.7)">1/17/2021 12 AM</text>
<rect x="153.4" y="452.9" width="9" height="15.8" fill="#ffff00" stroke="#333" stroke-width="0.8"/>
<text x="159.7" y="478.7" font-size="6.5" text-anchor="end" fill="#555" transform="rotate(-45 159.7 478.7)">1 AM</text>
<rect x="170.7" y="457.0" width="9" height="11.7" fill="#ffff00" stroke="#333" stroke-width="0.8"/>
<text x="177.0" y="478.7" font-size="6.5" text-anchor="end" fill="#555" transform="rotate(-45 177.0 478.7)">2 AM</text>
<rect x="188.0" y="461.9" width="9" height="6.8" fill="#00e400" stroke="#333" stroke-width="0.8"/>
<text x="194.3" y="478.7" font-size="6.5" text-anchor="end" fill="#555" transform="rotate(-45 194.3 478.7)">3 AM</text>
<rect x="205.4" y="464.9" width="9" height="3.8" fill="#00e400" stroke="#333" stroke-width="0.8"/>
<text x="211.7" y="478.7" font-size="6.5" text-anchor="end" fill="#555" transform="rotate(-45 211.7 478.7)">4 AM</text>
<rect x="222.7" y="466.6" width="9" height="2.1" fill="#00e400" stroke="#333" stroke-width="0.8"/>
<text x="229.0" y="478.7" font-size="6.5" text-anchor="end" fill="#555" transform="rotate(-45 229.0 478.7)">5 AM</text>
<rect x="240.0" y="466.6" width="9" height="2.1" fill="#00e400" stroke="#333" stroke-width="0.8"/>
<text x="246.3" y="478.7" font-size="6.5" text-anchor="end" fill="#555" transform="rotate(-45 246.3 478.7)">6 AM</text>
<rect x="257.4" y="464.4" width="9" height="4.3" fill="#00e400" stroke="#333" stroke-width="0.8"/>
<text x="263.7" y="478.7" font-size="6.5" text-anchor="end" fill="#555" transform="rotate(-45 263.7 478.7)">7 AM</text>
<rect x="274.7" y="459.5" width="9" height="9.2" fill="#00e400" stroke="#333" stroke-width="0.8"/>
<text x="281.0" y="478.7" font-size="6.5" text-anchor="end" fill="#555" transform="rotate(-45 281.0 478.7)">8 AM</text>
<rect x="292.1" y="453.8" width="9" height="14.9" fill="#ffff00" stroke="#333" stroke-width="0.8"/>
<text x="298.4" y="478.7" font-size="6.5" text-anchor="end" fill="#555" transform="rotate(-45 298.4 478.7)">9 AM</text>
<rect x="309.4" y="452.5" width="9" height="16.2" fill="#ffff00" stroke="#333" stroke-width="0.8"/>
<text x="315.7" y="478.7" font-size="6.5" text-anchor="end" fill="#555" transform="rotate(-45 315.7 478.7)">10 AM</text>
<rect x="326.7" y="453.8" width="9" height="14.9" fill="#ffff00" stroke="#333" stroke-width="0.8"/>
<text x="333.0" y="478.7" font-size="6.5" text-anchor="end" fill="#555" transform="rotate(-45 333.0 478.7)">11 AM</text>
<rect x="344.1" y="454.2" width="9" height="14.5" fill="#ffff00" stroke="#333" stroke-width="0.8"/>
<text x="350.4" y="478.7" font-size="6.5" text-anchor="end" fill="#555" transform="rotate(-45 350.4 478.7)">12 PM</text>
<rect x="361.4" y="449.9" width="9" height="18.8" fill="#ffff00" stroke="#333" stroke-width="0.8"/>
<text x="367.7" y="478.7" font-size="6.5" text-anchor="end" fill="#555" transform="rotate(-45 367.7 478.7)">1 PM</text>
<rect x="378.7" y="454.2" width="9" height="14.5" fill="#ffff00" stroke="#333" stroke-width="0.8"/>
<text x="385.0" y="478.7" font-size="6.5" text-anchor="end" fill="#555" transform="rotate(-45 385.0 478.7)">2 PM</text>
<rect x="396.1" y="452.3" width="9" height="16.4" fill="#ffff00" stroke="#333" stroke-width="0.8"/>
<text x="402.4" y="478.7" font-size="6.5" text-anchor="end" fill="#555" transform="rotate(-45 402.4 478.7)">3 PM</text>
<rect x="413.4" y="417.5" width="9" height="51.2" fill="#99004c" stroke="#333" stroke-width="0.8"/>
<text x="419.7" y="478.7" font-size="6.5" text-anchor="end" fill="#555" transform="rotate(-45 419.7 478.7)">4 PM</text>
<rect x="430.8" y="406.8" width="9" height="61.9" fill="#99004c" stroke="#333" stroke-width="0.8"/>
<text x="437.1" y="478.7" font-size="6.5" text-anchor="end" fill="#555" transform="rotate(-45 437.1 478.7)">5 PM</text>
<rect x="448.1" y="415.3" width="9" height="53.4" fill="#99004c" stroke="#333" stroke-width="0.8"/>
<text x="454.4" y="478.7" font-size="6.5" text-anchor="end" fill="#555" transform="rotate(-45 454.4 478.7)">6 PM</text>
<rect x="465.4" y="415.3" width="9" height="53.4" fill="#99004c" stroke="#333" stroke-width="0.8"/>
<text x="471.7" y="478.7" font-size="6.5" text-anchor="end" fill="#555" transform="rotate(-45 471.7 478.7)">7 PM</text>
<text x="35.5" y="412" font-size="7" text-anchor="middle" fill="#333" transform="rotate(-90 35.5 412)">AQI</text>
<text x="251.7" y="340" font-size="11" text-anchor="middle" fill="#333">Bishkek – PM2.5</text>
</svg>

<div id="cc" class="abs">
 <div class="b"><div class="abs" style="left:0;top:5px;width:145px;font-size:8.8px">Current Conditions</div><div class="abs" style="left:0;top:17.5px;width:145px;font-size:7px">observed at</div><div class="abs" style="left:0;top:29px;width:145px;font-size:8.8px">Jan 17, 2021 7:00 PM (LT)</div></div>
 <div class="m">250 AQI<br>Very Unhealthy<br>PM2.5</div>
 <div class="h"><div style="font-weight:bold;font-size:7px;text-align:center;padding-top:6px">Health Message</div><div style="font-size:7.05px;line-height:12.3px;color:#555;padding:4.5px 0 0 3.5px;white-space:nowrap">AQI values between 201 and 300 trigger a<br>health alert, meaning everyone may<br>experience more serious health effects.</div></div>
</div>
</body></html>
